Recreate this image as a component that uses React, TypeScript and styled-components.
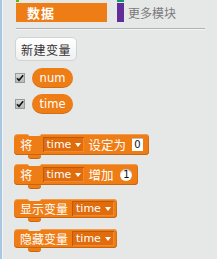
import styled, { createGlobalStyle } from "styled-components";

const GlobalStyle = createGlobalStyle`
  html, body {
    margin: 0;
    padding: 0;
  }
  body {
    width: 217px;
    height: 259px;
    overflow: hidden;
    background: #e6e8e8;
    font-family: "Noto Sans CJK SC", "Noto Sans", sans-serif;
  }
`;

const ORANGE = "#ee7d16";
const BG = "#e6e8e8";

// the first row is scrolled out of view, only the bottom of its colour bars shows
const categories = [
  { name: "运算", color: "#5cb712", hidden: true },
  { name: "画笔", color: "#0e9a6c", hidden: true },
  { name: "数据", color: ORANGE, selected: true },
  { name: "更多模块", color: "#632d99" },
];

const Check = () => (
  <svg width="8" height="8" viewBox="0 0 8 8">
    <path d="M1 4.2 L3 6.3 L7.2 1.2" fill="none" stroke="#111" strokeWidth="1.6" />
  </svg>
);

const Dropdown = ({ value }: { value: string }) => (
  <Field>
    {value}
    <Arrow />
  </Field>
);

const App = () => {
  return (
    <>
      <GlobalStyle />
      <Page>
        <Palette>
          <Categories>
            {categories.map((c) => (
              <Category key={c.name} $selected={!!c.selected}>
                {!c.selected && <Swatch $color={c.color} $thin={c.name === "运算"} />}
                {!c.hidden && <CatLabel $selected={!!c.selected}>{c.name}</CatLabel>}
              </Category>
            ))}
          </Categories>
          <Divider />
          <NewButton>新建变量</NewButton>
          <VarList>
            {["num", "time"].map((v) => (
              <VarRow key={v}>
                <CheckBox>
                  <Check />
                </CheckBox>
                <Reporter>{v}</Reporter>
              </VarRow>
            ))}
          </VarList>
          <Blocks>
            <Block>
              <Label $first>将</Label>
              <Dropdown value="time" />
              <Label>设定为</Label>
              <NumBox>0</NumBox>
            </Block>
            <Block>
              <Label $first>将</Label>
              <Dropdown value="time" />
              <Label>增加</Label>
              <NumRound>1</NumRound>
            </Block>
          </Blocks>
          <Blocks $top={14} $gap={11}>
            <Block $small>
              <Label $small>显示变量</Label>
              <Dropdown value="time" />
            </Block>
            <Block $small>
              <Label $small>隐藏变量</Label>
              <Dropdown value="time" />
            </Block>
          </Blocks>
        </Palette>
      </Page>
    </>
  );
};

export default App;

const Page = styled.div`
  display: flex;
  width: 217px;
  height: 259px;
  box-sizing: border-box;
  border-left: 2px solid #a9c8e2;
  box-shadow: inset 1px 0 #f1f3f3;
  overflow: hidden;
`;

const Palette = styled.div`
  display: flex;
  flex-direction: column;
  flex: 1;
  padding-left: 14px;
`;

const Categories = styled.div`
  display: grid;
  grid-template-columns: 91px 1fr;
  column-gap: 10px;
  row-gap: 1px;
  margin-top: -17px;
`;

const Category = styled.div<{ $selected: boolean }>`
  display: flex;
  align-items: center;
  gap: 4px;
  height: 19px;
  background: ${({ $selected }) => ($selected ? ORANGE : "transparent")};
  padding-left: ${({ $selected }) => ($selected ? "11px" : "0")};
`;

const Swatch = styled.span<{ $color: string; $thin?: boolean }>`
  width: ${({ $thin }) => ($thin ? 3 : 7)}px;
  height: 100%;
  background: ${({ $color }) => $color};
`;

const CatLabel = styled.span<{ $selected: boolean }>`
  font-size: ${({ $selected }) => ($selected ? "13px" : "12px")};
  font-weight: ${({ $selected }) => ($selected ? 700 : 400)};
  letter-spacing: ${({ $selected }) => ($selected ? "1px" : "0")};
  color: ${({ $selected }) => ($selected ? "#fff" : "#7a7a7a")};
  line-height: 19px;
`;

const Divider = styled.div`
  width: 189px;
  margin-top: 6px;
  border-top: 1px solid #b1b3b3;
  border-bottom: 1px solid #f3f4f4;
`;

const NewButton = styled.div`
  align-self: flex-start;
  margin: 7px 0 0 -1px;
  width: 62px;
  height: 24px;
  box-sizing: border-box;
  display: flex;
  align-items: center;
  justify-content: center;
  border: 1px solid #d2d4d4;
  border-radius: 5px;
  background: linear-gradient(#ffffff, #f0f0f0);
  color: #333;
  font-size: 12px;
  letter-spacing: 0.5px;
`;

const VarList = styled.div`
  display: flex;
  flex-direction: column;
  gap: 6px;
  margin-top: 7px;
`;

const VarRow = styled.div`
  display: flex;
  align-items: center;
  gap: 7px;
`;

const CheckBox = styled.div`
  width: 10px;
  height: 10px;
  margin-left: -1px;
  box-sizing: border-box;
  display: flex;
  align-items: center;
  justify-content: center;
  background: linear-gradient(#d8d8d8, #b8b8b8);
  border: 1px solid #9a9a9a;
`;

const Reporter = styled.div`
  width: 41px;
  height: 20px;
  border-radius: 10px;
  background: ${ORANGE};
  color: #fff;
  font-family: "DejaVu Sans", sans-serif;
  font-size: 11.5px;
  line-height: 20px;
  text-align: center;
  box-shadow: inset 0 -1px rgba(0, 0, 0, 0.12);
`;

const Blocks = styled.div<{ $top?: number; $gap?: number }>`
  display: flex;
  flex-direction: column;
  align-items: flex-start;
  gap: ${({ $gap }) => $gap ?? 9}px;
  margin-top: ${({ $top }) => $top ?? 20}px;
  margin-left: -2px;
`;

const Block = styled.div<{ $small?: boolean }>`
  position: relative;
  display: flex;
  align-items: center;
  gap: 4px;
  height: ${({ $small }) => ($small ? 19 : 21)}px;
  padding: 0 ${({ $small }) => ($small ? 3 : 6)}px 0 6px;
  background: ${ORANGE};
  border-radius: 4px;
  box-shadow: inset 0 1px rgba(255, 255, 255, 0.25), inset 0 -1px #c9650f,
    inset -1px 0 #d56f12;

  &::before {
    content: "";
    position: absolute;
    top: 0;
    left: 14px;
    width: 13px;
    height: 2px;
    background: ${BG};
    border-radius: 0 0 3px 3px;
  }

  &::after {
    content: "";
    position: absolute;
    bottom: -3px;
    left: 14px;
    width: 13px;
    height: 3px;
    background: ${ORANGE};
    border-radius: 0 0 3px 3px;
    box-shadow: 0 1px #c9650f;
  }
`;

const Label = styled.span<{ $first?: boolean; $small?: boolean }>`
  color: #fff;
  font-size: ${({ $small }) => ($small ? 12 : 12.5)}px;
  line-height: 16px;
  margin-right: ${({ $first }) => ($first ? "6px" : "0")};
`;

const Field = styled.span`
  display: flex;
  align-items: center;
  gap: 4px;
  height: 15px;
  padding: 0 3px 0 4px;
  background: #e06c0d;
  box-shadow: inset 1px 1px #bf5a06, inset -1px -1px #f08a2c;
  color: #fff;
  font-family: "DejaVu Sans", sans-serif;
  font-size: 11px;
  line-height: 15px;
`;

const Arrow = styled.span`
  width: 0;
  height: 0;
  border-left: 3px solid transparent;
  border-right: 3px solid transparent;
  border-top: 4px solid #fff;
`;

const NumBox = styled.span`
  width: 11px;
  height: 13px;
  margin-left: 2px;
  background: #fff;
  color: #111;
  font-family: "DejaVu Sans", sans-serif;
  font-size: 10px;
  line-height: 13px;
  text-align: center;
  box-shadow: inset 0 1px #bbb;
`;

const NumRound = styled(NumBox)`
  width: 12px;
  height: 12px;
  line-height: 12px;
  border-radius: 6px;
  margin-left: 3px;
`;
